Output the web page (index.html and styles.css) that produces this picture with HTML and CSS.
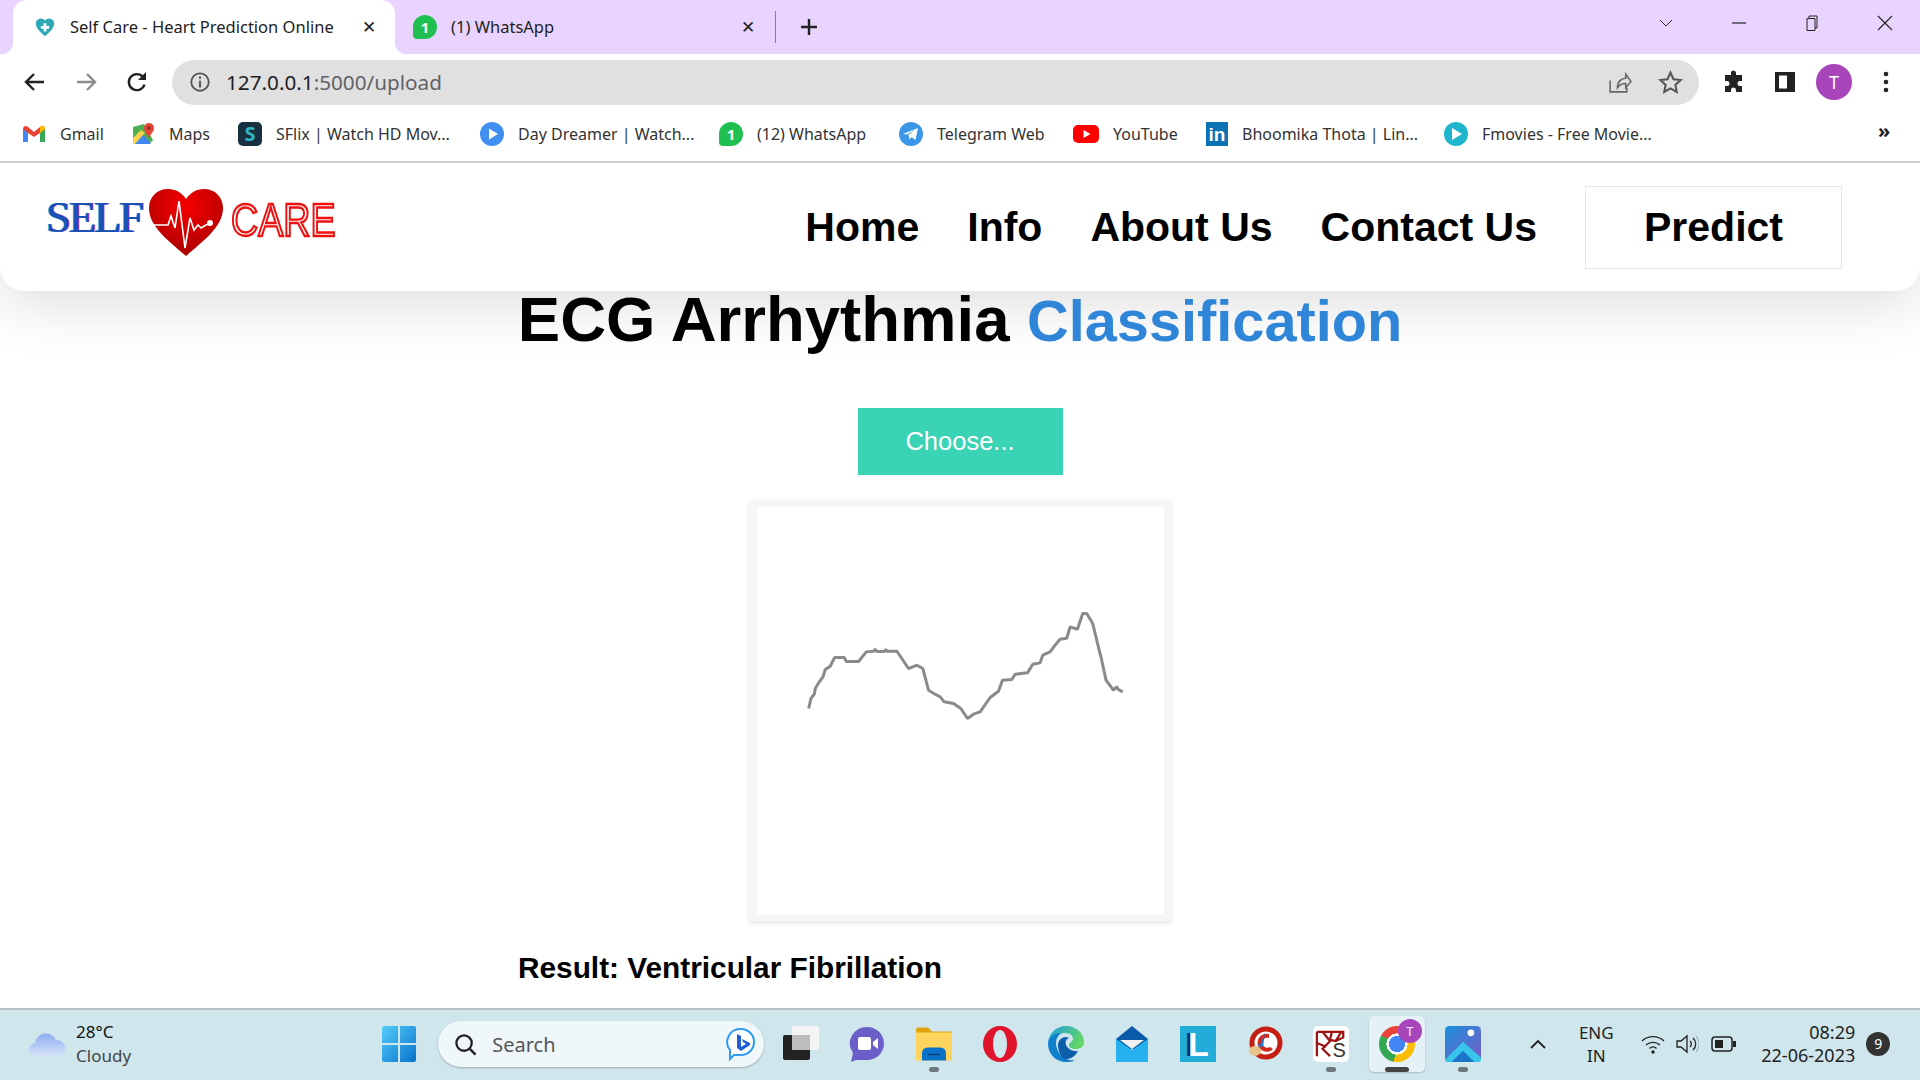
FILE: index.html
```html
<!DOCTYPE html>
<html lang="en">
<head>
    <meta charset="UTF-8">
    <title>Self Care - Heart Prediction Online</title>
    <link rel="stylesheet" href="styles.css">
</head>
<body>
    <div class="tabstrip">
        <div class="tab active">
            <svg class="favicon" viewBox="0 0 24 24"><path d="M12 22C6 17 2 13 2 8a5.5 5.5 0 0 1 10-3 5.5 5.5 0 0 1 10 3c0 5-4 9-10 14z" fill="#2fa9b8"/><path d="M10.5 8h3v3h3v3h-3v3h-3v-3h-3v-3h3z" fill="#fff"/></svg>
            <span class="tab-title">Self Care - Heart Prediction Online</span>
            <span class="tab-x">✕</span>
        </div>
        <div class="tab">
            <div class="wa-icon">1</div>
            <span class="tab-title">(1) WhatsApp</span>
            <span class="tab-x">✕</span>
        </div>
        <div class="tab-sep"></div>
        <svg class="new-tab" viewBox="0 0 20 20"><path d="M10 2v16M2 10h16" stroke="#222" stroke-width="2.4"/></svg>
        <div class="win-controls">
            <svg viewBox="0 0 16 16"><path d="M2 5l6 6 6-6" fill="none" stroke="#333"/></svg>
            <svg viewBox="0 0 16 16"><path d="M1 8h14" stroke="#222" stroke-width="1.2"/></svg>
            <svg viewBox="0 0 16 16"><path d="M3 3.5h8v12H3zM5 3.5V1h8v12h-2" fill="none" stroke="#222"/></svg>
            <svg viewBox="0 0 16 16"><path d="M1 1l14 14M15 1L1 15" stroke="#222" stroke-width="1.1"/></svg>
        </div>
    </div>

    <div class="toolbar">
        <svg class="tool" viewBox="0 0 24 24"><path d="M21 12H4M11 4l-8 8 8 8" fill="none" stroke="#222" stroke-width="2.4"/></svg>
        <svg class="tool" viewBox="0 0 24 24"><path d="M3 12h17M13 4l8 8-8 8" fill="none" stroke="#8d8d8d" stroke-width="2.4"/></svg>
        <svg class="tool" viewBox="0 0 24 24"><path d="M19.5 14.5A8 8 0 1 1 18 7" fill="none" stroke="#222" stroke-width="2.4"/><path d="M21 2v8h-8z" fill="#222"/></svg>
        <div class="omnibox">
            <svg class="info" viewBox="0 0 24 24"><circle cx="12" cy="12" r="9.5" fill="none" stroke="#555" stroke-width="2"/><path d="M12 10.5V18M12 6v2.5" stroke="#555" stroke-width="2.2"/></svg>
            <span class="url">127.0.0.1<span class="url-rest">:5000/upload</span></span>
            <svg class="omni-icon" viewBox="0 0 24 24"><path d="M3 10v11h16v-4M10 17c0-6 4-9 8-9V4l5 7-5 6v-4c-3 0-6 1-8 4z" fill="none" stroke="#666" stroke-width="1.5"/></svg>
            <svg class="omni-icon" viewBox="0 0 24 24"><path d="M12 2.5l2.9 6.3 6.8.8-5 4.7 1.3 6.8-6-3.4-6 3.4 1.3-6.8-5-4.7 6.8-.8z" fill="none" stroke="#555" stroke-width="2"/></svg>
        </div>
        <svg class="tool puzzle" viewBox="0 0 24 24"><path d="M9 3a2.5 2.5 0 0 1 5 0v2h6v6h-2a2.5 2.5 0 0 0 0 5h2v6h-6v-2a2.5 2.5 0 0 0-5 0v2H3v-6h2a2.5 2.5 0 0 0 0-5H3V5h6z" fill="#222"/></svg>
        <svg class="tool panel" viewBox="0 0 24 24"><path d="M2 2h20v20H2zM6 5.5v13h8v-13z" fill="#222" fill-rule="evenodd"/></svg>
        <div class="avatar">T</div>
        <svg class="tool menu" viewBox="0 0 24 24"><circle cx="12" cy="4" r="2.3" fill="#222"/><circle cx="12" cy="12" r="2.3" fill="#222"/><circle cx="12" cy="20" r="2.3" fill="#222"/></svg>
    </div>

    <div class="bookmarks">
        <div class="bm">
            <svg viewBox="0 0 24 24"><path d="M1 6v14h5V10z" fill="#4285f4"/><path d="M23 6v14h-5V10z" fill="#34a853"/><path d="M1 7c0-3 3-4 5-2l6 5 6-5c2-2 5-1 5 2l-5 4-6 4-6-4z" fill="#ea4335"/><path d="M18 4.5c2-1.500 5-.5 5 2.500l-5 4z" fill="#fbbc04"/></svg>
            <span>Gmail</span>
        </div>
        <div class="bm">
            <svg viewBox="0 0 24 24"><path d="M2 5l11-3 9 16-4 4H2z" fill="#4caf50"/><path d="M2 22l9-11 9 11z" fill="#4285f4"/><path d="M2 16l8-8 4 3L4 22H2z" fill="#fbd34a"/><path d="M18 1a5 5 0 0 1 5 5c0 4-5 8-5 10-.5-2-5-6-5-10a5 5 0 0 1 5-5z" fill="#e5453a"/><circle cx="18" cy="6" r="1.8" fill="#8e2a22"/></svg>
            <span>Maps</span>
        </div>
        <div class="bm">
            <div class="sflix-icon">S</div>
            <span>SFlix | Watch HD Mov...</span>
        </div>
        <div class="bm">
            <svg viewBox="0 0 24 24"><circle cx="12" cy="12" r="12" fill="#3f8ef0"/><path d="M9 6.5l9 5.5-9 5.5z" fill="#fff"/></svg>
            <span>Day Dreamer | Watch...</span>
        </div>
        <div class="bm">
            <div class="wa-icon">1</div>
            <span>(12) WhatsApp</span>
        </div>
        <div class="bm">
            <svg viewBox="0 0 24 24"><circle cx="12" cy="12" r="12" fill="#3c96e8"/><path d="M4 12l15-6-2.5 12-4-3-2 2.5-1-4.5 6-5-7.5 4.5z" fill="#fff"/></svg>
            <span>Telegram Web</span>
        </div>
        <div class="bm bm-yt">
            <svg viewBox="0 0 26 24"><rect x="0" y="3" width="26" height="18" rx="5" fill="#f00"/><path d="M10.5 8l7 4-7 4z" fill="#fff"/></svg>
            <span>YouTube</span>
        </div>
        <div class="bm">
            <div class="in-icon">in</div>
            <span>Bhoomika Thota | Lin...</span>
        </div>
        <div class="bm">
            <svg viewBox="0 0 24 24"><circle cx="12" cy="12" r="12" fill="#1eb6cc"/><path d="M8 6l10 6-10 6z" fill="#fff"/></svg>
            <span>Fmovies - Free Movie...</span>
        </div>
        <div class="bm-more">»</div>
    </div>

    <div class="page">
        <nav class="nav">
            <div class="logo">
                <span class="logo-self">SELF</span>
                <svg class="logo-heart" viewBox="0 0 74 67">
                    <defs>
                        <radialGradient id="heartFill" cx="50%" cy="25%" r="75%">
                            <stop offset="0" stop-color="#f60000"/>
                            <stop offset="1" stop-color="#a90000"/>
                        </radialGradient>
                    </defs>
                    <path d="M37 67C20 52 0 38 0 19 0 8 8 0 19 0c8 0 14 4 18 10C41 4 47 0 55 0c11 0 19 8 19 19 0 19-20 33-37 48z" fill="url(#heartFill)"/>
                    <path d="M4 36h15l3-9 4 12 4-27 6 47 5-30 4 12 4-5 3 3 5-3 6-2" fill="none" stroke="#fff" stroke-width="1.6"/>
                    <circle cx="61" cy="34" r="3" fill="#fff"/>
                </svg>
                <span class="logo-care">CARE</span>
            </div>
            <div class="nav-links">
                <a href="#">Home</a>
                <a href="#">Info</a>
                <a href="#">About Us</a>
                <a href="#">Contact Us</a>
                <a href="#" class="predict">Predict</a>
            </div>
        </nav>

        <div class="content">
            <h1>ECG Arrhythmia <span class="blue">Classification</span></h1>
            <button type="button" class="choose-btn">Choose...</button>
            <div class="preview">
                <svg viewBox="50 50 1222 1222">
                    <polyline class="trace" points="205,655 212,625 222,612 225,595 235,578 248,560 255,538 270,528 283,502 312,502 318,514 355,514 378,485 400,483 405,477 410,484 432,484 436,478 440,483 470,483 505,535 530,525 548,535 565,600 590,615 600,620 612,635 640,640 662,655 682,685 700,672 720,665 750,622 775,603 787,570 815,568 825,552 862,548 878,522 900,518 908,495 930,485 945,465 960,447 980,444 990,410 1012,417 1028,370 1040,370 1058,400 1075,470 1085,510 1098,570 1120,600 1130,590 1135,598 1148,605"/>
                </svg>
            </div>
            <div class="result">Result: Ventricular Fibrillation</div>
        </div>
    </div>

    <div class="taskbar">
        <div class="weather">
            <svg viewBox="0 0 36 26"><defs><linearGradient id="cloudFill" x1="0" y1="0" x2="0" y2="1"><stop offset="0" stop-color="#8eaef0"/><stop offset="1" stop-color="#d4e2f8"/></linearGradient></defs><path d="M7 25a6.5 6.5 0 0 1-1-13 11 11 0 0 1 21-3 8 8 0 0 1 2 16z" fill="url(#cloudFill)"/></svg>
            <div class="weather-text">
                <div>28°C</div>
                <div class="weather-sub">Cloudy</div>
            </div>
        </div>
        <div class="slot">
            <svg class="ti" viewBox="0 0 34 36"><defs><linearGradient id="winFill" x1="0" y1="0" x2="1" y2="1"><stop offset="0" stop-color="#56cdfb"/><stop offset="1" stop-color="#0673cc"/></linearGradient></defs><path d="M0 2q0-2 2-2h14v17H0zM18 0h14q2 0 2 2v15H18zM0 19h16v17H2q-2 0-2-2zM18 19h16v15q0 2-2 2H18z" fill="url(#winFill)"/></svg>
        </div>
        <div class="search">
            <svg class="search-icon" viewBox="0 0 24 24"><circle cx="10.5" cy="10.5" r="8" fill="none" stroke="#222" stroke-width="2.4"/><path d="M16.5 16.5l6 6" stroke="#222" stroke-width="2.6"/></svg>
            <span>Search</span>
            <svg class="bing-icon" viewBox="0 0 30 34"><path d="M15 2a13 13 0 0 1 0 26H8l-4 4v-9A13 13 0 0 1 15 2z" fill="#fff" stroke="#2b9cf0" stroke-width="2"/><path d="M11 7l4 2v11l5-3-3-2-1-3 8 4v2l-9 6-4-3z" fill="#1f5fd8"/></svg>
        </div>
        <div class="slot">
            <svg class="ti" viewBox="0 0 36 36"><rect x="9" y="0" width="27" height="24" rx="2" fill="#f4f4f4"/><rect x="0" y="9" width="27" height="25" rx="2" fill="#222"/><rect x="9" y="9" width="18" height="15" fill="#bdbdbd"/></svg>
        </div>
        <div class="slot">
            <svg class="ti" viewBox="0 0 34 36"><path d="M17 1a17 16.5 0 0 1 0 33H6l-5 2 2-9A17 16.5 0 0 1 17 1z" fill="#6a5fc8"/><rect x="8" y="11" width="13" height="13" rx="2" fill="#fff"/><path d="M23 16l5-4v11l-5-4z" fill="#fff"/></svg>
        </div>
        <div class="slot has-dot">
            <svg class="ti" viewBox="0 0 36 33"><path d="M0 2q0-2 2-2h10l4 4h20v6H0z" fill="#e0a30b"/><path d="M0 5h36v28H0z" fill="#fdd45c"/><path d="M6 33v-7q0-6 6-6h12q6 0 6 6v7z" fill="#0a72c8"/><path d="M12 27h12" stroke="#063f78" stroke-width="1.5"/></svg>
        </div>
        <div class="slot">
            <svg class="ti" viewBox="0 0 34 36"><ellipse cx="17" cy="18" rx="17" ry="18" fill="#e0142a"/><ellipse cx="17" cy="18" rx="7" ry="14" fill="#cfe6ec"/></svg>
        </div>
        <div class="slot">
            <svg class="ti" viewBox="0 0 36 36"><defs><linearGradient id="edgeFill" x1="0" y1="0" x2="1" y2="0.4"><stop offset="0" stop-color="#1b9de2"/><stop offset="1" stop-color="#62d56a"/></linearGradient></defs><path d="M18 0c11 0 18 8 18 16 0 5-4 7-8 7-5 0-7-2-7-4 0-3 4-3 4-6 0-4-4-6-8-6C8 7 1 13 0 18 0 8 8 0 18 0z" fill="url(#edgeFill)"/><path d="M0 18C1 10 8 7 14 7c-4 2-6 6-6 10 0 10 9 19 19 17-3 2-6 2-9 2C8 36 0 28 0 18z" fill="#0f7ecb"/><path d="M10 19c0-5 4-8 8-8 1 0 2 .5 3 1-3 1-4 4-3 7s6 7 12 6c-3 6-9 9-14 8-4-3-6-9-6-14z" fill="#0c5ea8"/></svg>
        </div>
        <div class="slot">
            <svg class="ti" viewBox="0 0 32 36"><path d="M0 13L16 0l16 13v10H0z" fill="#0a5cab"/><path d="M4 14h24L16 23z" fill="#f1f1f1"/><path d="M0 13l16 11 16-11v23H0z" fill="#26b1ee"/></svg>
        </div>
        <div class="slot">
            <div class="l-icon">L</div>
        </div>
        <div class="slot">
            <svg class="ti" viewBox="0 0 36 36"><circle cx="19" cy="17" r="14" fill="#fff" stroke="#c41f12" stroke-width="5"/><path d="M22 8a9 9 0 1 0 4 15l-3-2a5 5 0 1 1-1-9z" fill="#d32a18"/><path d="M18 6l-4 11-4 3 6 1z" fill="#2a6fc4"/><ellipse cx="8" cy="25" rx="6" ry="5" fill="#e6c28c"/></svg>
        </div>
        <div class="slot has-dot">
            <div class="ks-icon"><span>S</span><svg viewBox="0 0 34 30"><path d="M2 2h28v6l-8 4-8-2M2 2v26M8 2l8 10-8 8 8 8M2 14l10 4M18 2l-2 8M28 2l-6 10" fill="none" stroke="#9c1414" stroke-width="2.4"/></svg></div>
        </div>
        <div class="slot current">
            <div class="chrome-icon"></div>
            <div class="chrome-badge">T</div>
        </div>
        <div class="slot has-dot">
            <svg class="ti" viewBox="0 0 32 32"><defs><linearGradient id="picFill" x1="0" y1="0" x2="1" y2="1"><stop offset="0" stop-color="#1a90dc"/><stop offset="1" stop-color="#7a5cc4"/></linearGradient></defs><rect width="32" height="32" rx="4" fill="url(#picFill)"/><circle cx="23" cy="6" r="3" fill="#fff"/><path d="M0 30l16-16 16 14v2q0 2-2 2H2q-2 0-2-2z" fill="#39c4ea"/><path d="M6 32l10-10 10 10z" fill="#1a74c8"/></svg>
        </div>
        <div class="tray">
            <svg class="tray-up" viewBox="0 0 18 12"><path d="M2 10l7-7 7 7" fill="none" stroke="#222" stroke-width="1.8"/></svg>
            <div class="lang">ENG<br>IN</div>
            <svg class="tray-wifi" viewBox="0 0 24 20"><path d="M1 7a16 16 0 0 1 22 0M5 11a10.5 10.5 0 0 1 14 0M8.5 14.5a5 5 0 0 1 7 0" fill="none" stroke="#222" stroke-width="1.4"/><circle cx="12" cy="18" r="1.7" fill="#222"/></svg>
            <svg class="tray-vol" viewBox="0 0 24 20"><path d="M2 7h4l6-5v16l-6-5H2z" fill="none" stroke="#222" stroke-width="1.3"/><path d="M15 7a4 4 0 0 1 0 6M18 4a8 8 0 0 1 0 12" fill="none" stroke="#222" stroke-width="1.3"/><path d="M21 2a12 12 0 0 1 0 16" fill="none" stroke="#a9bcc2" stroke-width="1.2"/></svg>
            <svg class="tray-bat" viewBox="0 0 26 16"><rect x="1" y="1" width="20" height="14" rx="3" fill="none" stroke="#222" stroke-width="1.5"/><rect x="4" y="4" width="8" height="8" fill="#222"/><rect x="22" y="5" width="3" height="6" fill="#222"/></svg>
            <div class="clock">08:29<br>22-06-2023</div>
            <div class="notif">9</div>
        </div>
    </div>
</body>
</html>
```

FILE: styles.css
```css
* {
    box-sizing: border-box;
}
html, body {
    margin: 0;
    padding: 0;
}
body {
    width: 1920px;
    height: 1080px;
    overflow: hidden;
    display: flex;
    flex-direction: column;
    background: #fff;
    font-family: "Noto Sans", "Open Sans", sans-serif;
    color: #222;
}

/* browser tabs */
.tabstrip {
    height: 54px;
    background: #e8d4fe;
    display: flex;
    align-items: center;
    padding-left: 13px;
}
.tab {
    width: 380px;
    height: 54px;
    display: flex;
    align-items: center;
    padding-left: 18px;
    font-size: 16.5px;
}
.tab.active {
    width: 382px;
    background: #fff;
    border-radius: 14px 14px 0 0;
    position: relative;
    padding-left: 21px;
}
.tab.active::before,
.tab.active::after {
    content: "";
    position: absolute;
    bottom: 0;
    width: 12px;
    height: 12px;
}
.tab.active::before {
    left: -12px;
    background: radial-gradient(circle at 0 0, transparent 12px, #fff 12.5px);
}
.tab.active::after {
    right: -12px;
    background: radial-gradient(circle at 100% 0, transparent 12px, #fff 12.5px);
}
.favicon {
    width: 22px;
    height: 22px;
    flex: none;
}
.tab-title {
    margin: 0 0 2px 14px;
    flex: 1;
    white-space: nowrap;
}
.tab-x {
    font-size: 17px;
    font-weight: bold;
    width: 33px;
    color: #222;
    font-family: "DejaVu Sans", sans-serif;
}
.tab:not(.active) .tab-x {
    width: 34px;
}
.tab-sep {
    width: 1px;
    height: 32px;
    background: #8a7f96;
}
.new-tab {
    width: 20px;
    height: 20px;
    margin-left: 23px;
}
.win-controls {
    margin-left: auto;
    display: flex;
    align-items: center;
    padding-right: 27px;
    gap: 57px;
    margin-top: -8px;
}
.win-controls svg {
    width: 16px;
    height: 16px;
}

/* address bar row */
.toolbar {
    height: 56px;
    display: flex;
    align-items: center;
    padding-left: 23px;
    background: #fff;
}
.tool {
    width: 24px;
    height: 24px;
    flex: none;
    margin-right: 27px;
}
.toolbar .tool:nth-child(3) {
    margin-right: 24px;
}
.omnibox {
    width: 1527px;
    height: 45px;
    background: #e0e0e0;
    border-radius: 23px;
    display: flex;
    align-items: center;
    padding-left: 17px;
    margin-right: 23px;
    margin-left: -1px;
}
.info {
    width: 22px;
    height: 22px;
    flex: none;
}
.url {
    margin-left: 15px;
    font-size: 20.7px;
    color: #202124;
    flex: 1;
}
.url-rest {
    color: #5f6368;
}
.omni-icon {
    width: 25px;
    height: 25px;
    margin-right: 26px;
}
.omni-icon:last-child {
    margin-right: 16px;
}
.puzzle {
    margin-right: 27px;
}
.panel {
    margin-right: 19px;
}
.avatar {
    width: 36px;
    height: 36px;
    border-radius: 50%;
    background: #a945bb;
    color: #fff;
    font-size: 18px;
    display: flex;
    align-items: center;
    justify-content: center;
    margin-right: 22px;
    flex: none;
}
.menu {
    margin-right: 0;
}

/* bookmarks bar */
.bookmarks {
    height: 53px;
    display: grid;
    grid-template-columns: 109px 107px 242px 239px 180px 174px 131px 240px 427px auto;
    align-items: center;
    padding-left: 22px;
    padding-bottom: 4px;
    border-bottom: 2px solid #cfcfcf;
    font-size: 16px;
    color: #333;
}
.bm {
    display: flex;
    align-items: center;
    gap: 14px;
    white-space: nowrap;
}
.bm svg {
    width: 24px;
    height: 24px;
    flex: none;
}
.bm-yt svg {
    width: 26px;
}
.sflix-icon {
    width: 24px;
    height: 24px;
    flex: none;
    border-radius: 5px;
    background: #17303f;
    color: #2fb7c4;
    font-weight: bold;
    font-size: 20px;
    line-height: 24px;
    text-align: center;
}
.wa-icon {
    width: 24px;
    height: 24px;
    flex: none;
    background: #1fc04f;
    border-radius: 50% 50% 50% 4px;
    color: #fff;
    font-size: 15px;
    font-weight: bold;
    line-height: 24px;
    text-align: center;
}
.in-icon {
    width: 22px;
    height: 24px;
    flex: none;
    margin-left: 2px;
    background: #0b72b5;
    color: #fff;
    font-weight: bold;
    font-size: 19px;
    line-height: 25px;
    text-align: center;
    font-family: "Liberation Sans", sans-serif;
}
.bm-more {
    font-size: 20px;
    color: #222;
    font-weight: bold;
    line-height: 20px;
    margin-top: -6px;
    margin-left: 7px;
}

/* website */
.page {
    flex: 1;
    overflow: hidden;
    display: flex;
    flex-direction: column;
    font-family: "Liberation Sans", Arial, sans-serif;
    background: #fff;
}
.nav {
    height: 128px;
    flex: none;
    background: #fff;
    border-radius: 0 0 24px 24px;
    box-shadow: 0 10px 60px rgba(0, 0, 0, 0.15);
    display: flex;
    align-items: center;
    justify-content: space-between;
    padding: 0 78px 0 46px;
}
.logo {
    display: flex;
    align-items: center;
    margin-top: -9px;
}
.logo-self {
    font-family: "Liberation Serif", serif;
    font-size: 45px;
    letter-spacing: -2.3px;
    color: #1b50b5;
    text-shadow: -1px 0 #19b5e0, 1px 0 #c02ad0;
    width: 103px;
    margin-bottom: 12px;
}
.logo-heart {
    width: 74px;
    height: 67px;
    flex: none;
}
.logo-care {
    margin-left: 8px;
    margin-bottom: 6px;
    font-size: 47px;
    font-family: "Liberation Sans", sans-serif;
    color: transparent;
    -webkit-text-stroke: 2.4px #f01010;
    transform: scaleX(0.8);
    transform-origin: left center;
    line-height: 34px;
}
.nav-links {
    display: flex;
    align-items: center;
    gap: 48px;
}
.nav-links a {
    color: #000;
    font-weight: bold;
    font-size: 41px;
    text-decoration: none;
}
.nav-links .predict {
    padding: 0 58px;
    height: 83px;
    line-height: 81px;
    border: 1px solid #e6e6ea;
}
.content {
    display: flex;
    flex-direction: column;
    align-items: center;
}
h1 {
    margin: -8px 0 0;
    font-size: 63.5px;
    line-height: 72px;
    color: #000;
    white-space: nowrap;
}
.blue {
    color: #2f86d9;
    font-size: 57.7px;
}
.choose-btn {
    margin-top: 51px;
    width: 205px;
    height: 67px;
    background: #3ad3b5;
    border: none;
    color: #fff;
    font-size: 25.5px;
    font-family: "Liberation Sans", sans-serif;
}
.preview {
    margin-top: 25px;
    width: 421px;
    height: 421px;
    border: 7px solid #f6f6f6;
    box-shadow: 0 2px 5px rgba(0, 0, 0, 0.12);
    background: #fff;
}
.preview svg {
    display: block;
    width: 100%;
    height: 100%;
}
.trace {
    fill: none;
    stroke: #8a8a8a;
    stroke-width: 9;
    stroke-linejoin: bevel;
    filter: blur(1.5px);
}
.result {
    width: 884px;
    margin-top: 30px;
    font-size: 29.8px;
    font-weight: bold;
    color: #000;
}

/* windows taskbar */
.taskbar {
    height: 72px;
    flex: none;
    background: #cfe6ec;
    border-top: 2px solid #b5c0c3;
    padding-bottom: 2px;
    display: flex;
    align-items: center;
}
.weather {
    width: 366px;
    flex: none;
    display: flex;
    align-items: center;
    padding-left: 29px;
    gap: 11px;
    font-size: 17px;
    line-height: 24px;
    color: #111;
}
.weather > svg {
    width: 36px;
    height: 26px;
}
.weather-sub {
    color: #444;
}
.slot {
    width: 66.2px;
    height: 56px;
    flex: none;
    display: flex;
    align-items: center;
    justify-content: center;
    position: relative;
}
.ti {
    width: 36px;
    height: 36px;
}
.has-dot::after {
    content: "";
    position: absolute;
    bottom: 0;
    left: 50%;
    margin-left: -5px;
    width: 10px;
    height: 5px;
    border-radius: 3px;
    background: #6d787c;
}
.search {
    width: 326px;
    height: 46px;
    flex: none;
    margin: 0 4px 0 6px;
    background: #eff7fa;
    border-radius: 23px;
    box-shadow: 0 1px 2px rgba(0, 0, 0, 0.25);
    display: flex;
    align-items: center;
    padding-left: 16px;
    font-size: 20px;
    color: #555;
}
.search-icon {
    width: 23px;
    height: 23px;
    margin-right: 15px;
}
.search span {
    flex: 1;
}
.bing-icon {
    width: 30px;
    height: 34px;
    margin-right: 8px;
}
.l-icon {
    width: 36px;
    height: 36px;
    background: #22acd8;
    color: #fff;
    font-family: "Liberation Sans", sans-serif;
    font-weight: bold;
    font-size: 34px;
    line-height: 36px;
    text-align: center;
    text-shadow: -3px 0 #0b2c6e;
}
.ks-icon {
    width: 36px;
    height: 36px;
    background: #fff;
    border-radius: 5px;
    position: relative;
    overflow: hidden;
}
.ks-icon svg {
    width: 32px;
    height: 30px;
    display: block;
    margin: 3px 0 0 2px;
}
.ks-icon span {
    position: absolute;
    right: 3px;
    bottom: 1px;
    font-size: 20px;
    line-height: 22px;
    color: #333;
    font-family: "Liberation Sans", sans-serif;
}
.current {
    background: #e4f1f6;
    width: 56px;
    margin: 0 5.1px;
    border-radius: 5px;
    box-shadow: 0 1px 2px rgba(0, 0, 0, 0.2);
}
.current::after {
    content: "";
    position: absolute;
    bottom: 0;
    left: 50%;
    margin-left: -12px;
    width: 24px;
    height: 5px;
    border-radius: 3px;
    background: #444;
}
.chrome-icon {
    width: 36px;
    height: 36px;
    border-radius: 50%;
    background:
        radial-gradient(circle, #4285f4 0 31%, #fff 32% 41%, transparent 42%),
        conic-gradient(#ea4335 0 70deg, #fbbc04 70deg 190deg, #34a853 190deg 300deg, #ea4335 300deg);
}
.chrome-badge {
    position: absolute;
    top: 3px;
    right: 3px;
    width: 24px;
    height: 24px;
    border-radius: 50%;
    background: #a945bb;
    color: #eee;
    font-size: 13px;
    line-height: 24px;
    text-align: center;
}
.tray {
    flex: 1;
    display: flex;
    align-items: center;
    padding-left: 33px;
    font-size: 17px;
    line-height: 23px;
    color: #222;
}
.tray-up {
    width: 18px;
    height: 12px;
    margin-right: 25px;
}
.lang {
    width: 48px;
    text-align: center;
    margin-right: 21px;
}
.tray-wifi {
    width: 24px;
    height: 20px;
    margin-right: 10px;
}
.tray-vol {
    width: 24px;
    height: 20px;
    margin-right: 12px;
}
.tray-bat {
    width: 26px;
    height: 16px;
    margin-right: 11px;
}
.clock {
    width: 107px;
    font-size: 18px;
    text-align: right;
    margin-right: 11px;
    white-space: nowrap;
}
.notif {
    width: 24px;
    height: 24px;
    border-radius: 50%;
    background: #333;
    color: #fff;
    font-size: 14px;
    line-height: 24px;
    text-align: center;
}
```
